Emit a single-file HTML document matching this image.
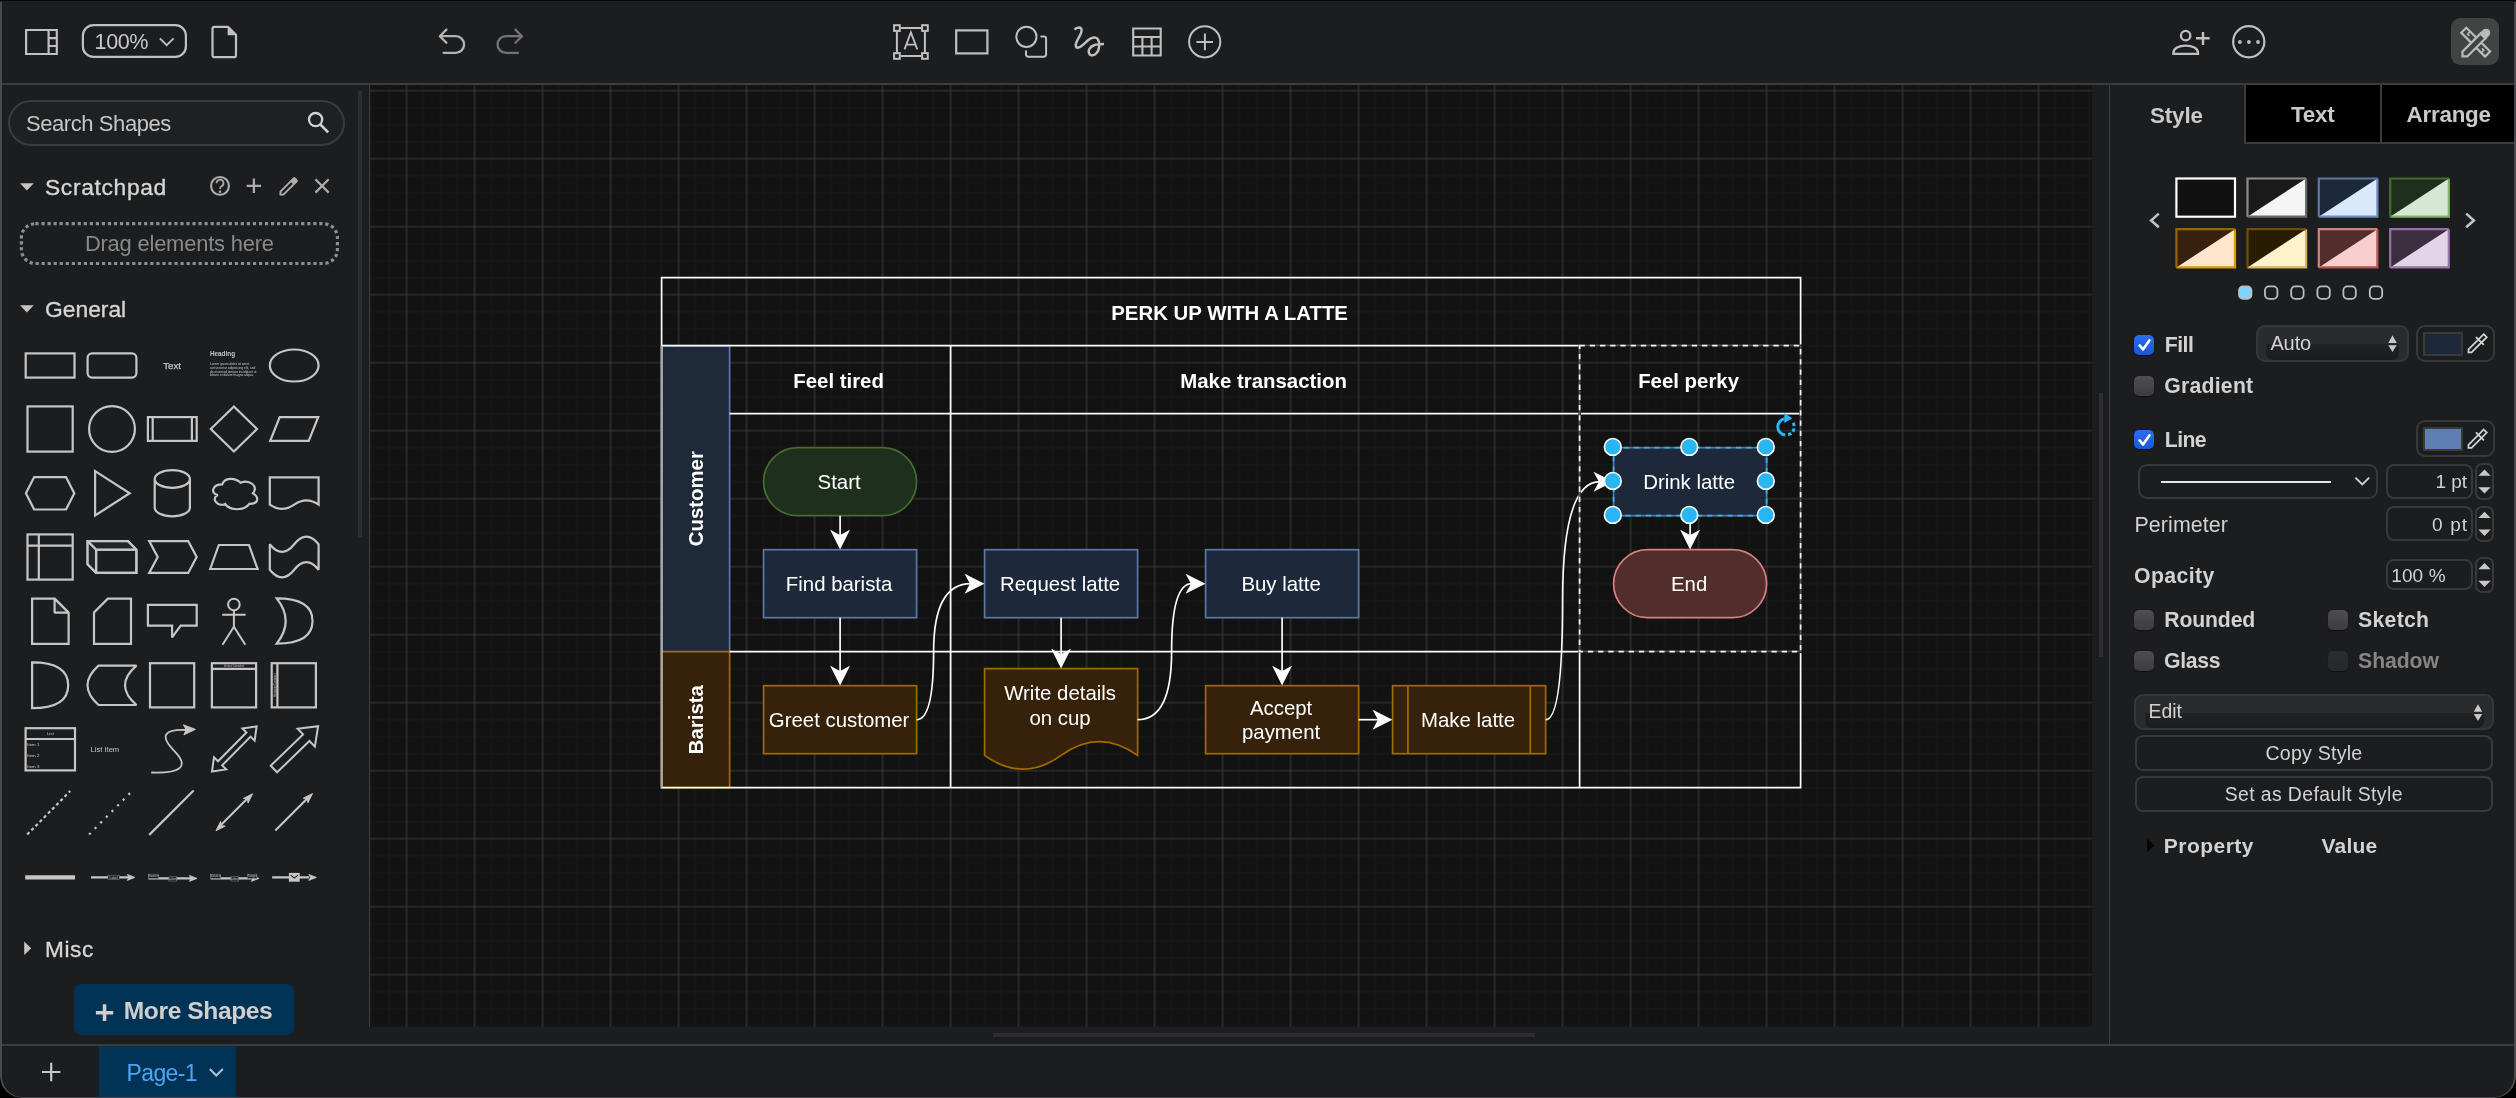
<!DOCTYPE html>
<html><head><meta charset="utf-8"><title>draw.io</title>
<style>
html,body{margin:0;padding:0;background:#000;}
body{width:2516px;height:1098px;position:relative;overflow:hidden;font-family:"Liberation Sans",sans-serif;}
#win{will-change:transform;position:absolute;left:0;top:0;width:2516px;height:1098px;background:#1c1d1f;border-radius:0 0 22px 22px;overflow:hidden;}
.t{position:absolute;white-space:pre;line-height:1;margin:0;padding:0;}
.a{position:absolute;}
svg{position:absolute;overflow:visible;}
</style></head><body><div id="win">
<svg class="a" style="left:369px;top:85px" width="1723" height="942" viewBox="0 0 1723 942">
<defs><pattern id="gp" x="37.60" y="5.70" width="68" height="68" patternUnits="userSpaceOnUse">
<path d="M17 0V68M34 0V68M51 0V68M0 17H68M0 34H68M0 51H68" stroke="#161616" stroke-width="2" fill="none"/>
<path d="M0 0V68M0 0H68M68 0V68M0 68H68" stroke="#3a3a3a" stroke-width="1.1" fill="none"/>
</pattern></defs>
<rect width="1723" height="942" fill="#121212"/><rect width="1723" height="942" fill="url(#gp)"/>
<rect x="0" y="0" width="1.2" height="942" fill="#3a3a3a"/>
</svg>
<div class="a" style="left:0;top:83px;width:2516px;height:2px;background:#3b3c3e"></div>
<div class="a" style="left:0;top:1044px;width:2516px;height:2px;background:#3b3c3e"></div>
<div class="a" style="left:2108.5px;top:85px;width:1.6px;height:959px;background:#3b3c3e"></div>
<div class="a" style="left:358px;top:91px;width:4px;height:446px;background:#2e2e30"></div>
<div class="a" style="left:2099px;top:393px;width:4px;height:264px;background:#2e2e30"></div>
<div class="a" style="left:993px;top:1033px;width:542px;height:4px;background:#2e2e30"></div>
<svg class="a" style="left:0;top:0" width="2516" height="1098" viewBox="0 0 2516 1098" fill="none" stroke="#c0c0c0" stroke-width="2.2" stroke-linecap="butt" stroke-linejoin="miter" >
<path d="M26.1 30h30.7v24H26.1zM48.6 30v24M48.6 38.2h8.2M48.6 46h8.2"/>
<rect x="82.9" y="25.1" width="103" height="31.8" rx="10.5" ry="10.5"/>
<path d="M159.8 38.3l6.9 6.9 6.9-6.9" stroke-width="1.9"/>
<path d="M214.5 26.8h13.5l8 8v20.4a2 2 0 0 1-2 2h-19.5a2 2 0 0 1-2-2v-26.4a2 2 0 0 1 2-2z" stroke-linejoin="round"/>
<path d="M227.6 26.6l8.6 8.6h-8.6z" fill="#c0c0c0" stroke="none"/>
<path d="M446.4 29.6l-6.6 6.6 6.6 6.6M440.2 36.2h15.6a8.3 8.3 0 0 1 0 16.6h-12.2" stroke="#b4b4b4" stroke-width="2.3" stroke-linecap="round" stroke-linejoin="round"/>
<path d="M515.4 29.6l6.6 6.6-6.6 6.6M521.6 36.2h-15.8a8.3 8.3 0 0 0 0 16.6h12.2" stroke="#747474" stroke-width="2.3" stroke-linecap="round" stroke-linejoin="round"/>
<g stroke-width="2">
<path d="M896.9 31.8v20.400M924.9 31.8v20.400M900.6 28.1h20.600M900.6 55.9h20.600"/>
<rect x="894.1" y="25.2" width="5.700" height="5.700"/>
<rect x="922.1" y="25.2" width="5.700" height="5.700"/>
<rect x="894.1" y="53.1" width="5.700" height="5.700"/>
<rect x="922.1" y="53.1" width="5.700" height="5.700"/>
<path d="M904.5 49.4l6.400-17 6.400 17M906.800 44.700h8.200" stroke-width="1.800"/>
</g>
<rect x="956.2" y="30.4" width="31.2" height="23"/>
<circle cx="1026.4" cy="36.800" r="10.100" stroke-width="2"/>
<path d="M1041.200 36.600h2.600a2.300 2.300 0 0 1 2.300 2.300v15.500a2.300 2.300 0 0 1-2.300 2.300h-15.500a2.300 2.300 0 0 1-2.300-2.300v-3.200" stroke-width="2" stroke-linecap="round"/>
<path d="M1074.500 29.600C1076.500 27.600 1079.500 26.800 1081 28.400C1083.500 31 1079 37 1077 41C1074.800 45.400 1075.600 48 1078.400 47.600C1082 47 1085 42.600 1088.600 39.800C1092 37.200 1096.400 36.400 1098 39.400C1100 43 1099.600 49.600 1096.600 53C1094 56 1090.400 56.200 1089 53.400C1087.600 50.600 1090 46.600 1094 45.200C1097 44.200 1100.600 44.100 1104 44.100" stroke-width="2.500" stroke-linecap="butt" stroke-linejoin="round"/>
<path d="M1133.2 28.5h27.5v27h-27.5zM1133.2 37h27.5M1133.2 46.500h27.5M1142.400 37v18.500M1151.600 37v18.500" stroke-width="2.1"/>
<circle cx="1204.7" cy="41.8" r="15.6" stroke-width="2"/><path d="M1196.4 42h16.6M1204.9 33.6v16.6" stroke-width="2"/>
<circle cx="2185.650" cy="35.650" r="4.700" stroke-width="2.300"/>
<path d="M2173.400 53.900v-1.200c0-4.400 5.600-7.100 12.300-7.100s12.300 2.700 12.300 7.100v1.200z" stroke-width="2.300" stroke-linejoin="miter"/>
<path d="M2196 38.300h13.600M2203 32v13" stroke-width="2.400"/>
<circle cx="2248.750" cy="41.800" r="15.600" stroke-width="2.200"/>
<circle cx="2239.9" cy="42" r="1.900" fill="#c0c0c0" stroke="none"/>
<circle cx="2248.9" cy="42" r="1.900" fill="#c0c0c0" stroke="none"/>
<circle cx="2258.0" cy="42" r="1.900" fill="#c0c0c0" stroke="none"/>
</svg>
<div class="a" style="left:2451px;top:18px;width:48px;height:47px;border-radius:9.5px;background:#424443"></div>
<svg class="a" style="left:0;top:0" width="2516" height="1098" viewBox="0 0 2516 1098" fill="none" stroke="#c0c0c0" stroke-width="2.2" stroke-linecap="butt" stroke-linejoin="miter" stroke="#b9bbba">
<g transform="translate(2475.700 42.200) rotate(45)" stroke="#b9bbba" stroke-width="2.200">
<path d="M-16.800 -3.600h33.600v7.200h-33.600z" />
<path d="M-11.400 -3.500v3.600h2.600M11.400 3.500v-3.600h-2.600" stroke-width="1.600"/>
</g>
<g transform="translate(2475.600 43.300) rotate(-45)" stroke="#b9bbba" stroke-width="2.200">
<path d="M-15.200 -3.400h26.200v6.800h-26.200l-3.400-3.400z" fill="#424443"/>
<path d="M9.800 -3.700h5.000a3.700 3.700 0 0 1 0 7.400h-5.000z" fill="#b9bbba" stroke-width="1"/>
</g>
</svg>
<div class="t" style="left:94.60px;top:31.00px;font-size:21.60px;letter-spacing:-0.418px;color:#c8c8c8;">100%</div>
<div class="a" style="left:99px;top:1045.600px;width:137px;height:53px;background:#003355"></div>
<div class="t" style="left:126.60px;top:1062.00px;font-size:23.00px;letter-spacing:-0.655px;color:#4ea5f5;">Page-1</div>
<svg class="a" style="left:0;top:0" width="2516" height="1098" viewBox="0 0 2516 1098" fill="none" stroke="#c0c0c0" stroke-width="2.2" stroke-linecap="butt" stroke-linejoin="miter" >
<path d="M209.8 1069l6.500 6.500 6.500-6.500" stroke="#a8c4dc" stroke-width="2"/>
<path d="M42 1072h18.400M51.200 1062.800v18.400" stroke="#c8c8c8" stroke-width="2.2"/>
</svg>
<div class="a" style="left:0;top:0;width:2516px;height:1.300px;background:#060606"></div>
<div class="a" style="left:7.5px;top:99.500px;width:337px;height:46.500px;border:2px solid #3b3c3e;border-radius:25px;box-sizing:border-box;background:#1f2022"></div>
<div class="t" style="left:26.00px;top:113.00px;font-size:22.00px;letter-spacing:-0.428px;color:#c6c6c6;">Search Shapes</div>
<svg class="a" style="left:0;top:0" width="2516" height="1098" viewBox="0 0 2516 1098" fill="none" stroke="#c0c0c0" stroke-width="2.2" stroke-linecap="butt" stroke-linejoin="miter" >
<circle cx="315.600" cy="119.600" r="6.600" stroke="#d0d0d0" stroke-width="2.3"/><path d="M320.400 124.500l7.800 7.800" stroke="#d0d0d0" stroke-width="2.600"/>
<path d="M20 183.200h13.800l-6.900 7.200z" fill="#c4c4c4" stroke="none"/>
<path d="M20 305.200h13.800l-6.900 7.200z" fill="#c4c4c4" stroke="none"/>
<path d="M24.200 941.400v13.600l7-6.800z" fill="#c4c4c4" stroke="none"/>
<g stroke="#adadad">
<circle cx="220" cy="185.900" r="8.900" stroke-width="2.100"/>
<path d="M216.500 183.300a3.500 3.500 0 1 1 5.200 3c-1.300 0.800-1.700 1.400-1.700 2.600" stroke-width="1.700"/><circle cx="220" cy="191.700" r="1.250" fill="#adadad" stroke="none"/>
<path d="M246.700 185.900h14.400M253.900 178.600v14.500" stroke-width="2.300"/>
<g transform="translate(288 187.100) rotate(-45)" stroke-width="2">
<path d="M-8.600 -2.100H9.800a1 1 0 0 1 1 1V1.100a1 1 0 0 1-1 1H-8.600L-10.700 0Z" stroke-linejoin="round" stroke-width="1.900"/>
<path d="M5.600 -2.800H10.300a1.400 1.400 0 0 1 1.400 1.400V1.400a1.400 1.400 0 0 1-1.400 1.400H5.600Z" fill="#adadad" stroke="none"/>
</g>
<path d="M315.400 179.300l13.300 13.300M328.700 179.300l-13.300 13.300" stroke-width="2.200"/>
</g>
</svg>
<div class="t" style="left:45.00px;top:176.00px;font-size:22.80px;letter-spacing:0.662px;color:#d6d6d6;-webkit-text-stroke:0.35px #d6d6d6;">Scratchpad</div>
<div class="t" style="left:45.00px;top:298.00px;font-size:22.80px;letter-spacing:0.013px;color:#d6d6d6;-webkit-text-stroke:0.35px #d6d6d6;">General</div>
<div class="t" style="left:45.00px;top:939.00px;font-size:22.60px;letter-spacing:0.586px;color:#d6d6d6;-webkit-text-stroke:0.35px #d6d6d6;">Misc</div>
<svg class="a" style="left:0;top:0" width="380" height="300" viewBox="0 0 380 300"><rect x="21.400" y="223.700" width="316" height="39.800" rx="14" fill="none" stroke="#8e8e8e" stroke-width="3.200" stroke-dasharray="3.200 2.840"/></svg>
<div class="t" style="left:84.90px;top:233.00px;font-size:21.90px;letter-spacing:-0.190px;color:#8a8a8a;">Drag elements here</div>
<div class="a" style="left:74.300px;top:984px;width:220px;height:51px;border-radius:7px;background:#003355"></div>
<div class="t" style="left:123.80px;top:999.00px;font-size:24.60px;letter-spacing:-0.411px;color:#cfcfcf;font-weight:bold;">More Shapes</div>
<svg class="a" style="left:0;top:0" width="2516" height="1098" viewBox="0 0 2516 1098" fill="none" stroke="#c0c0c0" stroke-width="2.2" stroke-linecap="butt" stroke-linejoin="miter" >
<path d="M95.900 1012.700h17.300M104.550 1004.300v16.800" stroke="#cfcfcf" stroke-width="3.500"/>
</svg>
<svg class="a" style="left:0;top:0" width="380" height="1098" viewBox="0 0 380 1098" fill="none" stroke="#c6c6c6" stroke-width="2.2" stroke-linejoin="miter" stroke-miterlimit="2.5" font-family="Liberation Sans, sans-serif">
<g transform="translate(24.60 340.00)"><rect x="1.100" y="13.400" width="48.800" height="24.200"/></g>
<g transform="translate(86.50 340.00)"><rect x="1.100" y="13.400" width="48.800" height="24.200" rx="4.500"/></g>
<g transform="translate(146.80 340.00)"><text x="25.300" y="28.800" font-size="9.700" text-anchor="middle" fill="#c6c6c6" stroke="#c6c6c6" stroke-width="0.25">Text</text></g>
<g transform="translate(208.40 340.00)"><text x="1.500" y="15.900" font-size="6.400" font-weight="bold" fill="#c6c6c6" stroke="none">Heading</text><text x="1.500" y="25.30" font-size="3.350" fill="#c6c6c6" stroke="none" textLength="40.0" lengthAdjust="spacingAndGlyphs">Lorem ipsum dolor sit amet,</text><text x="1.500" y="29.02" font-size="3.350" fill="#c6c6c6" stroke="none" textLength="45.5" lengthAdjust="spacingAndGlyphs">consectetur adipisicing elit, sed</text><text x="1.500" y="32.74" font-size="3.350" fill="#c6c6c6" stroke="none" textLength="46.5" lengthAdjust="spacingAndGlyphs">do eiusmod tempor incididunt ut</text><text x="1.500" y="36.46" font-size="3.350" fill="#c6c6c6" stroke="none" textLength="44.0" lengthAdjust="spacingAndGlyphs">labore et dolore magna aliqua.</text></g>
<g transform="translate(268.70 340.00)"><ellipse cx="25.500" cy="25.500" rx="24.400" ry="16"/></g>
<g transform="translate(24.60 403.50)"><rect x="2.900" y="2.900" width="45.200" height="45.200"/></g>
<g transform="translate(86.50 403.50)"><circle cx="25.500" cy="25.500" r="22.900"/></g>
<g transform="translate(146.80 403.50)"><rect x="1.100" y="13.600" width="48.800" height="23.800"/><path d="M5.900 13.600v23.800M45.100 13.600v23.800"/></g>
<g transform="translate(208.40 403.50)"><path d="M25.500 3.000l23.100 22.500-23.100 22.500-23.100-22.500z"/></g>
<g transform="translate(268.70 403.50)"><path d="M11 13.600h38.500l-9.500 23.800h-38.500z"/></g>
<g transform="translate(24.60 467.80)"><path d="M1.300 25.500l8.300-16.200h31.800l8.300 16.200-8.300 16.200h-31.800z"/></g>
<g transform="translate(86.50 467.80)"><path d="M8.600 3.300l34.600 22.200-34.600 22.200z"/></g>
<g transform="translate(146.80 467.80)"><path d="M7.900 11.200a17.600 8.800 0 0 1 35.200 0v28.600a17.600 8.800 0 0 1-35.200 0zM7.900 11.200a17.600 8.800 0 0 0 35.200 0"/></g>
<g transform="translate(208.40 467.80)"><path d="M13.80 16.65 C3.96 16.65 1.50 25.50 9.37 27.27 C1.50 31.16 10.36 39.66 16.75 36.12 C21.18 43.20 35.94 43.20 40.86 36.12 C50.70 36.12 50.70 29.04 44.55 25.50 C50.70 18.42 40.86 11.34 32.25 14.88 C26.10 9.57 16.26 9.57 13.80 16.65Z"/></g>
<g transform="translate(268.70 467.80)"><path d="M1.10 9.60H49.90V36.80Q37.70 28.16 25.50 36.80Q13.30 45.44 1.10 36.80Z"/></g>
<g transform="translate(24.60 531.50)"><rect x="2.900" y="2.900" width="45.200" height="45.200"/><path d="M14.200 2.900v45.200M2.900 14.200h45.200"/></g>
<g transform="translate(86.50 531.50)"><path d="M1.100 9.600h40.300l8.500 8.500v23.300h-40.300l-8.500-8.500z"/><path d="M1.100 9.600l8.500 8.500h40.300M9.600 18.100v23.300"/><path d="M1.100 9.600h40.300l8.500 8.500h-40.300v23.300l-8.500-8.500z" fill="#26292b" stroke="none" opacity="0.8"/><path d="M1.100 9.600h40.300l8.500 8.500v23.300h-40.300l-8.500-8.500zM1.100 9.600l8.500 8.500h40.300M9.600 18.100v23.300"/></g>
<g transform="translate(146.80 531.50)"><path d="M2.400 9.600h39l8.500 15.900-8.500 15.900h-39l8.500-15.900z"/></g>
<g transform="translate(208.40 531.50)"><path d="M1.800 37.500l8.600-24h30.200l8.600 24z"/></g>
<g transform="translate(268.70 531.50)"><path d="M1.10 12.78Q13.30 28.04 25.50 12.78Q37.70 -2.48 49.90 12.78V38.22Q37.70 22.96 25.50 38.22Q13.30 53.48 1.10 38.22Z"/></g>
<g transform="translate(24.60 595.50)"><path d="M7.500 3.100h22.500l14 14v31.300h-36.500z"/><path d="M30 3.100v14h14z" fill="#26292b" stroke-linejoin="bevel"/></g>
<g transform="translate(86.50 595.50)"><path d="M21.300 3.100h23.200v45.300h-37v-31.500z"/></g>
<g transform="translate(146.80 595.50)"><path d="M1.100 9.300h48.800v20.800h-16l-8.600 11.800v-11.800h-24.200z"/></g>
<g transform="translate(208.40 595.50)"><circle cx="25.500" cy="9" r="5.800" stroke-width="2"/><path d="M25.500 14.800v16.400M13.800 19.200h23.400M25.500 31.200l-11.400 18M25.500 31.200l11.400 18" stroke-width="2"/></g>
<g transform="translate(268.70 595.50)"><path d="M8 2.900Q43.800 2.900 43.800 25.500Q43.800 48.100 8 48.100Q26 25.500 8 2.900Z"/></g>
<g transform="translate(24.60 659.80)"><path d="M7.500 2.600Q43.600 2.600 43.600 25.500Q43.600 48.400 7.500 48.400Z"/></g>
<g transform="translate(86.50 659.80)"><path d="M12 5.800h38l0 0Q27 25.500 50 45.200h-38Q-10 25.500 12 5.800Z" /></g>
<g transform="translate(146.80 659.80)"><rect x="3.200" y="3.400" width="44.200" height="44.200"/></g>
<g transform="translate(208.40 659.80)"><rect x="3.500" y="3.400" width="44.200" height="44.200"/><path d="M3.500 9h44.200"/><text x="25.600" y="7.300" font-size="2.600" text-anchor="middle" fill="#c6c6c6" stroke="none">Vertical Container</text></g>
<g transform="translate(268.70 659.80)"><rect x="3" y="3.400" width="44.200" height="44.200"/><path d="M8.700 3.400v44.200"/><text transform="translate(6.900 25.500) rotate(-90)" font-size="2.600" text-anchor="middle" fill="#c6c6c6" stroke="none">Horizontal Container</text></g>
<g transform="translate(24.60 723.80)"><rect x="1" y="4.400" width="49.400" height="42.200"/><path d="M1 15.200h49.400"/><text x="25.700" y="11.700" font-size="4.400" text-anchor="middle" fill="#c6c6c6" stroke="none">List</text><text x="2.600" y="22.6" font-size="4.400" fill="#c6c6c6" stroke="none">Item 1</text><text x="2.600" y="33.3" font-size="4.400" fill="#c6c6c6" stroke="none">Item 2</text><text x="2.600" y="44.0" font-size="4.400" fill="#c6c6c6" stroke="none">Item 3</text></g>
<g transform="translate(86.50 723.80)"><text x="4" y="28.200" font-size="7.600" fill="#c6c6c6" stroke="none">List Item</text></g>
<g transform="translate(146.80 723.80)"><path d="M4.400 48.700Q50 50 27.600 27.300Q5.200 4.600 40 6.200" stroke-width="1.800"/><path d="M48.600 5.600l-11.500 5.400 2.300-5.100-2.800-4.900z" fill="#c6c6c6" stroke="#c6c6c6" stroke-width="1"/></g>
<g transform="translate(208.40 723.80)"><path d="M3.60 47.70L17.80 45.57L13.75 41.56L42.18 12.82L46.23 16.82L48.20 2.60L34.00 4.73L38.05 8.74L9.62 37.48L5.57 33.48Z" stroke-width="2"/></g>
<g transform="translate(268.70 723.80)"><path d="M8.40 48.50L40.75 17.18L46.17 22.79L49.40 2.40L28.92 4.97L34.35 10.57L2.00 41.90Z" stroke-width="2"/></g>
<g transform="translate(24.60 787.50)"><path d="M2.600 47l43-43.400" stroke-dasharray="3.100 2.800"/></g>
<g transform="translate(86.50 787.50)"><path d="M2.600 47l41-41.400" stroke-dasharray="2.200 5.800"/></g>
<g transform="translate(146.80 787.50)"><path d="M2.400 47.400l44.400-44.400"/></g>
<g transform="translate(208.40 787.50)"><path d="M10 40l30-30" stroke-width="2"/><path d="M44.20 6.30L39.60 15.49L39.14 11.36L35.01 10.90Z" fill="#c6c6c6" stroke="#c6c6c6" stroke-width="1"/><path d="M7.60 43.20L12.20 34.01L12.66 38.14L16.79 38.60Z" fill="#c6c6c6" stroke="#c6c6c6" stroke-width="1"/></g>
<g transform="translate(268.70 787.50)"><path d="M6.600 43l32-32" stroke-width="2"/><path d="M43.80 6.10L39.20 15.29L38.74 11.16L34.61 10.70Z" fill="#c6c6c6" stroke="#c6c6c6" stroke-width="1"/></g>
<g transform="translate(24.60 851.90)"><path d="M0.600 25.500h49.800" stroke-width="4.400"/></g>
<g transform="translate(86.50 851.90)"><path d="M4.5 25.50H43.4" stroke-width="2.100"/><path d="M48.4 25.50l-7.600 3 1.700-3-1.700-3z" fill="#c6c6c6" stroke="#c6c6c6" stroke-width="0.800"/><rect x="21.5" y="23.4" width="11.3" height="4.200" fill="#1c1d1f" stroke="#8a8a8a" stroke-width="0.500"/><text x="27.1" y="26.7" font-size="3.300" text-anchor="middle" fill="#c6c6c6" stroke="none">Label</text></g>
<g transform="translate(146.80 851.90)"><path d="M1.7 26.50H45.2" stroke-width="2.100"/><path d="M50.2 26.50l-7.600 3 1.700-3-1.700-3z" fill="#c6c6c6" stroke="#c6c6c6" stroke-width="0.800"/><rect x="1.7" y="22.3" width="10.0" height="4.200" fill="#1c1d1f" stroke="#8a8a8a" stroke-width="0.500"/><text x="6.7" y="25.6" font-size="3.300" text-anchor="middle" fill="#c6c6c6" stroke="none">Source</text><rect x="22.0" y="24.9" width="8.0" height="4.200" fill="#1c1d1f" stroke="#8a8a8a" stroke-width="0.500"/><text x="26.0" y="28.2" font-size="3.300" text-anchor="middle" fill="#c6c6c6" stroke="none">Label</text></g>
<g transform="translate(208.40 851.90)"><path d="M2.2 26.50H45.6" stroke-width="2.100"/><path d="M50.6 26.50l-7.600 3 1.700-3-1.700-3z" fill="#c6c6c6" stroke="#c6c6c6" stroke-width="0.800"/><rect x="2.2" y="22.3" width="10.0" height="4.200" fill="#1c1d1f" stroke="#8a8a8a" stroke-width="0.500"/><text x="7.2" y="25.6" font-size="3.300" text-anchor="middle" fill="#c6c6c6" stroke="none">Source</text><rect x="22.4" y="24.9" width="8.0" height="4.200" fill="#1c1d1f" stroke="#8a8a8a" stroke-width="0.500"/><text x="26.4" y="28.2" font-size="3.300" text-anchor="middle" fill="#c6c6c6" stroke="none">Label</text><rect x="39.0" y="22.3" width="9.5" height="4.200" fill="#1c1d1f" stroke="#8a8a8a" stroke-width="0.500"/><text x="43.8" y="25.6" font-size="3.300" text-anchor="middle" fill="#c6c6c6" stroke="none">Target</text></g>
<g transform="translate(268.70 851.90)"><path d="M3.400 25.500h37" stroke-width="2.100"/><path d="M47.700 25.500l-7.600 3 1.700-3-1.700-3z" fill="#c6c6c6" stroke="#c6c6c6" stroke-width="0.800"/><rect x="20.200" y="21" width="10.800" height="8.800" fill="#c6c6c6" stroke="none"/><path d="M22 23.200l3.600 3 3.600-3" stroke="#1c1d1f" stroke-width="1.100"/></g>
</svg>
<svg class="a" style="left:0;top:0" width="2516" height="1098" viewBox="0 0 2516 1098" fill="none" stroke="#fcfcfc" stroke-width="1.7" font-family="Liberation Sans, sans-serif">
<rect x="661.60" y="345.70" width="68.00" height="306.00" fill="#1e293a" stroke="#5c79a3"/>
<rect x="661.60" y="651.70" width="68.00" height="136.00" fill="#36220a" stroke="#a06a00"/>
<path d="M661.60 277.70H1800.60V787.70H661.60Z"/>
<path d="M661.60 345.70H1800.60"/>
<path d="M729.60 413.70H1800.60"/>
<path d="M729.60 651.70H1800.60"/>
<path d="M950.60 345.70V787.70"/>
<path d="M1579.60 345.70V787.70"/>
<path d="M661.60 345.70V787.70" stroke="#a9a9a9"/>
<rect x="763.60" y="447.70" width="153.00" height="68.00" fill="#1f2f1e" stroke="#446e2c" rx="34.00"/>
<rect x="763.60" y="549.70" width="153.00" height="68.00" fill="#1d293b" stroke="#5c79a3" />
<rect x="763.60" y="685.70" width="153.00" height="68.00" fill="#36220a" stroke="#a06a00" />
<rect x="984.60" y="549.70" width="153.00" height="68.00" fill="#1d293b" stroke="#5c79a3" />
<rect x="1205.60" y="549.70" width="153.00" height="68.00" fill="#1d293b" stroke="#5c79a3" />
<rect x="1205.60" y="685.70" width="153.00" height="68.00" fill="#36220a" stroke="#a06a00" />
<rect x="1392.60" y="685.70" width="153.00" height="68.00" fill="#36220a" stroke="#a06a00" />
<path d="M1407.90 685.70V753.70M1530.30 685.70V753.70" stroke="#a06a00"/>
<rect x="1613.60" y="447.70" width="153.00" height="68.00" fill="#1d293b" stroke="#5c79a3" />
<rect x="1613.60" y="549.70" width="153.00" height="68.00" fill="#512d2b" stroke="#d7817e" rx="34.00"/>
<path d="M984.60 668.70H1137.60V755.40Q1099.35 727.86 1061.10 755.40Q1022.85 782.94 984.60 755.40Z" fill="#36220a" stroke="#a06a00"/>
<path d="M840.10 515.70V535.98"/>
<path d="M840.10 548.20L831.55 531.10L840.10 535.68L848.65 531.10Z" fill="#fcfcfc" stroke="#fcfcfc" stroke-width="1.2" stroke-linejoin="miter"/>
<path d="M840.10 617.70V671.98"/>
<path d="M840.10 684.20L831.55 667.10L840.10 671.68L848.65 667.10Z" fill="#fcfcfc" stroke="#fcfcfc" stroke-width="1.2" stroke-linejoin="miter"/>
<path d="M1061.10 617.70V654.98"/>
<path d="M1061.10 667.20L1052.55 650.10L1061.10 654.68L1069.65 650.10Z" fill="#fcfcfc" stroke="#fcfcfc" stroke-width="1.2" stroke-linejoin="miter"/>
<path d="M1282.10 617.70V671.98"/>
<path d="M1282.10 684.20L1273.55 667.10L1282.10 671.68L1290.65 667.10Z" fill="#fcfcfc" stroke="#fcfcfc" stroke-width="1.2" stroke-linejoin="miter"/>
<path d="M1690.10 515.70V535.98"/>
<path d="M1690.10 548.20L1681.55 531.10L1690.10 535.68L1698.65 531.10Z" fill="#fcfcfc" stroke="#fcfcfc" stroke-width="1.2" stroke-linejoin="miter"/>
<path d="M1358.60 719.70H1378.88"/>
<path d="M1391.10 719.70L1374.00 728.25L1378.58 719.70L1374.00 711.15Z" fill="#fcfcfc" stroke="#fcfcfc" stroke-width="1.2" stroke-linejoin="miter"/>
<path d="M916.60 719.70Q933.60 719.70 933.60 651.70Q933.60 583.70 970.88 583.70"/>
<path d="M983.10 583.70L966.00 592.25L970.58 583.70L966.00 575.15Z" fill="#fcfcfc" stroke="#fcfcfc" stroke-width="1.2" stroke-linejoin="miter"/>
<path d="M1137.60 719.70Q1171.60 719.70 1171.60 651.70Q1171.60 583.70 1191.88 583.70"/>
<path d="M1204.10 583.70L1187.00 592.25L1191.58 583.70L1187.00 575.15Z" fill="#fcfcfc" stroke="#fcfcfc" stroke-width="1.2" stroke-linejoin="miter"/>
<path d="M1545.60 719.70Q1562.60 719.70 1562.60 600.70Q1562.60 481.70 1599.88 481.70"/>
<path d="M1612.10 481.70L1595.00 490.25L1599.58 481.70L1595.00 473.15Z" fill="#fcfcfc" stroke="#fcfcfc" stroke-width="1.2" stroke-linejoin="miter"/>
<path d="M1579.60 345.70H1800.60V651.70H1579.60Z" stroke="#121212" stroke-width="2.400"/>
<path d="M1579.60 345.70H1800.60V651.70H1579.60Z" stroke="#6a6a6a" stroke-width="0.900"/>
<path d="M1579.60 345.70H1800.60V651.70H1579.60Z" stroke="#f4f4f4" stroke-width="1.700" stroke-dasharray="5.300 4.900"/>
<rect x="1613.60" y="447.70" width="153.00" height="68.00" stroke="#29b6f2" stroke-width="1.700" stroke-dasharray="5.100 5.100"/>
<circle cx="1612.80" cy="446.90" r="8.400" fill="#29b6f2" stroke="#ffffff" stroke-width="1.600"/>
<circle cx="1612.80" cy="480.90" r="8.400" fill="#29b6f2" stroke="#ffffff" stroke-width="1.600"/>
<circle cx="1612.80" cy="514.90" r="8.400" fill="#29b6f2" stroke="#ffffff" stroke-width="1.600"/>
<circle cx="1689.30" cy="446.90" r="8.400" fill="#29b6f2" stroke="#ffffff" stroke-width="1.600"/>
<circle cx="1689.30" cy="514.90" r="8.400" fill="#29b6f2" stroke="#ffffff" stroke-width="1.600"/>
<circle cx="1765.80" cy="446.90" r="8.400" fill="#29b6f2" stroke="#ffffff" stroke-width="1.600"/>
<circle cx="1765.80" cy="480.90" r="8.400" fill="#29b6f2" stroke="#ffffff" stroke-width="1.600"/>
<circle cx="1765.80" cy="514.90" r="8.400" fill="#29b6f2" stroke="#ffffff" stroke-width="1.600"/>
<g transform="translate(1786.000 426.900)" stroke="#29b6f2" fill="none">
<path d="M-1.420 -8.070A8.200 8.200 0 0 0 -0.710 8.170" stroke-width="3"/>
<path d="M2.120 7.920A8.200 8.200 0 0 0 6.720 -4.700" stroke-width="3" stroke-dasharray="3.400 2.300"/>
<path d="M-1.700 -14.000L-1.700 -4.000L6.400 -8.600Z" fill="#29b6f2" stroke="none"/>
</g>
<text x="1229.60" y="319.90" font-size="20.40" text-anchor="middle" fill="#ffffff" stroke="none" font-weight="bold">PERK UP WITH A LATTE</text>
<text x="838.60" y="387.90" font-size="20.40" text-anchor="middle" fill="#ffffff" stroke="none" font-weight="bold">Feel tired</text>
<text x="1263.60" y="387.90" font-size="20.40" text-anchor="middle" fill="#ffffff" stroke="none" font-weight="bold">Make transaction</text>
<text x="1688.60" y="387.90" font-size="20.40" text-anchor="middle" fill="#ffffff" stroke="none" font-weight="bold">Feel perky</text>
<text x="839.10" y="489.10" font-size="20.40" text-anchor="middle" fill="#ffffff" stroke="none">Start</text>
<text x="839.10" y="591.10" font-size="20.40" text-anchor="middle" fill="#ffffff" stroke="none">Find barista</text>
<text x="839.10" y="727.10" font-size="20.40" text-anchor="middle" fill="#ffffff" stroke="none">Greet customer</text>
<text x="1060.10" y="591.10" font-size="20.40" text-anchor="middle" fill="#ffffff" stroke="none">Request latte</text>
<text x="1281.10" y="591.10" font-size="20.40" text-anchor="middle" fill="#ffffff" stroke="none">Buy latte</text>
<text x="1468.10" y="727.10" font-size="20.40" text-anchor="middle" fill="#ffffff" stroke="none">Make latte</text>
<text x="1689.10" y="489.10" font-size="20.40" text-anchor="middle" fill="#ffffff" stroke="none">Drink latte</text>
<text x="1689.10" y="591.10" font-size="20.40" text-anchor="middle" fill="#ffffff" stroke="none">End</text>
<text x="1281.10" y="714.75" font-size="20.40" text-anchor="middle" fill="#ffffff" stroke="none">Accept</text>
<text x="1281.10" y="739.25" font-size="20.40" text-anchor="middle" fill="#ffffff" stroke="none">payment</text>
<text x="1060.10" y="700.30" font-size="20.40" text-anchor="middle" fill="#ffffff" stroke="none">Write details</text>
<text x="1060.10" y="724.80" font-size="20.40" text-anchor="middle" fill="#ffffff" stroke="none">on cup</text>
<text transform="translate(695.60 498.70) rotate(-90)" x="0" y="7.30" font-size="20.40" font-weight="bold" text-anchor="middle" fill="#ffffff" stroke="none">Customer</text>
<text transform="translate(695.60 719.70) rotate(-90)" x="0" y="7.30" font-size="20.40" font-weight="bold" text-anchor="middle" fill="#ffffff" stroke="none">Barista</text>
</svg>
<div class="a" style="left:2244px;top:85px;width:272px;height:59px;background:#000"></div>
<div class="a" style="left:2244px;top:85px;width:2.200px;height:59px;background:#3b3c3e"></div>
<div class="a" style="left:2380px;top:85px;width:2.200px;height:59px;background:#3b3c3e"></div>
<div class="a" style="left:2244px;top:142px;width:272px;height:2px;background:#3b3c3e"></div>
<div class="t" style="left:2150.00px;top:105.00px;font-size:22.40px;letter-spacing:-0.134px;color:#c9c9c9;font-weight:bold;">Style</div>
<div class="t" style="left:2291.00px;top:104.00px;font-size:22.40px;letter-spacing:-0.199px;color:#c9c9c9;font-weight:bold;">Text</div>
<div class="t" style="left:2406.50px;top:104.00px;font-size:22.40px;letter-spacing:-0.230px;color:#c9c9c9;font-weight:bold;">Arrange</div>
<svg class="a" style="left:0;top:0" width="2516" height="1098" viewBox="0 0 2516 1098" fill="none" stroke="#c0c0c0" stroke-width="2.2" stroke-linecap="butt" stroke-linejoin="miter" stroke-width="2.4">
<rect x="2176.40" y="178.50" width="58.60" height="38.20" fill="#111111" stroke="none"/>
<rect x="2176.40" y="178.50" width="58.60" height="38.20" stroke="#ffffff"/>
<rect x="2247.50" y="178.50" width="58.60" height="38.20" fill="#1a1a1a" stroke="none"/>
<path d="M2306.10 178.50L2306.10 216.70L2247.50 216.70Z" fill="#f5f5f5" stroke="none"/>
<path d="M2306.10 178.50V216.70H2247.50" stroke="#6a6a6a"/>
<path d="M2247.50 216.70V178.50H2306.10" stroke="#8c8c8c"/>
<rect x="2318.80" y="178.50" width="58.60" height="38.20" fill="#1c293c" stroke="none"/>
<path d="M2377.40 178.50L2377.40 216.70L2318.80 216.70Z" fill="#dae8fc" stroke="none"/>
<path d="M2377.40 178.50V216.70H2318.80" stroke="#6c8ebf"/>
<path d="M2318.80 216.70V178.50H2377.40" stroke="#5c79a3"/>
<rect x="2390.20" y="178.50" width="58.60" height="38.20" fill="#1f2f1e" stroke="none"/>
<path d="M2448.80 178.50L2448.80 216.70L2390.20 216.70Z" fill="#d5e8d4" stroke="none"/>
<path d="M2448.80 178.50V216.70H2390.20" stroke="#82b366"/>
<path d="M2390.20 216.70V178.50H2448.80" stroke="#446e2c"/>
<rect x="2176.40" y="229.20" width="58.60" height="38.20" fill="#36210f" stroke="none"/>
<path d="M2235.00 229.20L2235.00 267.40L2176.40 267.40Z" fill="#ffe6cc" stroke="none"/>
<path d="M2235.00 229.20V267.40H2176.40" stroke="#d79b00"/>
<path d="M2176.40 267.40V229.20H2235.00" stroke="#996500"/>
<rect x="2247.50" y="229.20" width="58.60" height="38.20" fill="#281d00" stroke="none"/>
<path d="M2306.10 229.20L2306.10 267.40L2247.50 267.40Z" fill="#fff2cc" stroke="none"/>
<path d="M2306.10 229.20V267.40H2247.50" stroke="#d6b656"/>
<path d="M2247.50 267.40V229.20H2306.10" stroke="#6d5100"/>
<rect x="2318.80" y="229.20" width="58.60" height="38.20" fill="#512d2b" stroke="none"/>
<path d="M2377.40 229.20L2377.40 267.40L2318.80 267.40Z" fill="#f8cecc" stroke="none"/>
<path d="M2377.40 229.20V267.40H2318.80" stroke="#b85450"/>
<path d="M2318.80 267.40V229.20H2377.40" stroke="#d7817e"/>
<rect x="2390.20" y="229.20" width="58.60" height="38.20" fill="#392f3f" stroke="none"/>
<path d="M2448.80 229.20L2448.80 267.40L2390.20 267.40Z" fill="#e1d5e7" stroke="none"/>
<path d="M2448.80 229.20V267.40H2390.20" stroke="#9673a6"/>
<path d="M2390.20 267.40V229.20H2448.80" stroke="#9673a6"/>
<path d="M2158.800 213.600l-7.600 6.800 7.600 6.800" stroke="#c4c4c4" stroke-width="2.600"/>
<path d="M2466.200 213.600l7.600 6.800-7.600 6.800" stroke="#c4c4c4" stroke-width="2.600"/>
<rect x="2239.0" y="286.400" width="12.400" height="12.400" rx="4" fill="#7fd4ff" stroke="#bdbdbd" stroke-width="1.800"/>
<rect x="2265.0" y="286.400" width="12.400" height="12.400" rx="4" fill="none" stroke="#bdbdbd" stroke-width="1.800"/>
<rect x="2291.2" y="286.400" width="12.400" height="12.400" rx="4" fill="none" stroke="#bdbdbd" stroke-width="1.800"/>
<rect x="2317.4" y="286.400" width="12.400" height="12.400" rx="4" fill="none" stroke="#bdbdbd" stroke-width="1.800"/>
<rect x="2343.4" y="286.400" width="12.400" height="12.400" rx="4" fill="none" stroke="#bdbdbd" stroke-width="1.800"/>
<rect x="2369.8" y="286.400" width="12.400" height="12.400" rx="4" fill="none" stroke="#bdbdbd" stroke-width="1.800"/>
</svg>
<div class="a" style="left:2134.0px;top:335.2px;width:20.400px;height:19.600px;border-radius:5px;background:linear-gradient(#2a6ef0,#1a56d8);box-shadow:0 0.5px 1px rgba(0,0,0,.5)"></div>
<svg class="a" style="left:2134.0px;top:335.2px" width="21" height="20" viewBox="0 0 21 20" fill="none" stroke="#fff" stroke-width="2.600" stroke-linecap="round" stroke-linejoin="round"><path d="M5.600 10.400l3.400 4 6.400-9"/></svg>
<div class="a" style="left:2134.0px;top:376.0px;width:20.400px;height:19.600px;border-radius:5px;background:linear-gradient(#4e4e50,#3d3d3f);box-shadow:0 0.5px 1px rgba(0,0,0,.5)"></div>
<div class="a" style="left:2134.0px;top:429.9px;width:20.400px;height:19.600px;border-radius:5px;background:linear-gradient(#2a6ef0,#1a56d8);box-shadow:0 0.5px 1px rgba(0,0,0,.5)"></div>
<svg class="a" style="left:2134.0px;top:429.9px" width="21" height="20" viewBox="0 0 21 20" fill="none" stroke="#fff" stroke-width="2.600" stroke-linecap="round" stroke-linejoin="round"><path d="M5.600 10.400l3.400 4 6.400-9"/></svg>
<div class="a" style="left:2134.0px;top:610.0px;width:20.400px;height:19.600px;border-radius:5px;background:linear-gradient(#4e4e50,#3d3d3f);box-shadow:0 0.5px 1px rgba(0,0,0,.5)"></div>
<div class="a" style="left:2328.0px;top:610.0px;width:20.400px;height:19.600px;border-radius:5px;background:linear-gradient(#4e4e50,#3d3d3f);box-shadow:0 0.5px 1px rgba(0,0,0,.5)"></div>
<div class="a" style="left:2134.0px;top:651.0px;width:20.400px;height:19.600px;border-radius:5px;background:linear-gradient(#4e4e50,#3d3d3f);box-shadow:0 0.5px 1px rgba(0,0,0,.5)"></div>
<div class="a" style="left:2328.0px;top:651.0px;width:20.400px;height:19.600px;border-radius:5px;background:linear-gradient(#2c2d2f,#27282a);box-shadow:0 0.5px 1px rgba(0,0,0,.5)"></div>
<div class="t" style="left:2164.80px;top:334.00px;font-size:21.20px;letter-spacing:-0.504px;color:#d2d2d2;font-weight:bold;">Fill</div>
<div class="t" style="left:2164.30px;top:375.00px;font-size:21.20px;letter-spacing:0.247px;color:#d2d2d2;font-weight:bold;">Gradient</div>
<div class="t" style="left:2164.80px;top:429.00px;font-size:21.20px;letter-spacing:-0.596px;color:#d2d2d2;font-weight:bold;">Line</div>
<div class="t" style="left:2134.50px;top:515.00px;font-size:21.40px;letter-spacing:0.091px;color:#d2d2d2;">Perimeter</div>
<div class="t" style="left:2134.00px;top:565.00px;font-size:21.20px;letter-spacing:0.423px;color:#d2d2d2;font-weight:bold;">Opacity</div>
<div class="t" style="left:2164.30px;top:609.00px;font-size:21.20px;letter-spacing:-0.143px;color:#d2d2d2;font-weight:bold;">Rounded</div>
<div class="t" style="left:2358.10px;top:609.00px;font-size:21.20px;letter-spacing:0.297px;color:#d2d2d2;font-weight:bold;">Sketch</div>
<div class="t" style="left:2164.00px;top:650.00px;font-size:21.20px;letter-spacing:-0.287px;color:#d2d2d2;font-weight:bold;">Glass</div>
<div class="t" style="left:2358.10px;top:650.00px;font-size:21.20px;letter-spacing:-0.085px;color:#858585;font-weight:bold;">Shadow</div>
<div class="t" style="left:2163.80px;top:835.00px;font-size:21.00px;letter-spacing:0.478px;color:#d2d2d2;font-weight:bold;">Property</div>
<div class="t" style="left:2321.50px;top:835.00px;font-size:21.00px;letter-spacing:0.232px;color:#d2d2d2;font-weight:bold;">Value</div>
<div class="a" style="left:2256.4px;top:325.4px;width:152.7px;height:36.4px;border:2.0px solid #36373a;border-radius:9.0px;box-sizing:border-box;background:#2a2b2d"></div>
<div class="a" style="left:2266px;top:344px;width:132.500px;height:15.600px;background:linear-gradient(#212224,#1b1c1e);border-radius:0 0 7px 7px"></div>
<div class="t" style="left:2270.40px;top:333.00px;font-size:20.00px;letter-spacing:-0.113px;color:#d2d2d2;">Auto</div>
<div class="a" style="left:2416.1px;top:325.0px;width:78.7px;height:37.0px;border:2.0px solid #39393b;border-radius:9.0px;box-sizing:border-box;background:transparent"></div>
<div class="a" style="left:2423.100px;top:332px;width:40px;height:24px;background:#1d293b;border:2px solid #3a3a39;box-sizing:border-box"></div>
<div class="a" style="left:2416.1px;top:420.3px;width:78.7px;height:37.0px;border:2.0px solid #39393b;border-radius:9.0px;box-sizing:border-box;background:transparent"></div>
<div class="a" style="left:2423.100px;top:427.300px;width:40px;height:24px;background:#5f7fb2;border:2px solid #3a3a39;box-sizing:border-box"></div>
<div class="a" style="left:2137.6px;top:463.7px;width:240.9px;height:35.3px;border:2.0px solid #39393b;border-radius:9.0px;box-sizing:border-box;background:transparent"></div>
<div class="a" style="left:2161px;top:481px;width:170px;height:1.800px;background:#e6e6e6"></div>
<div class="a" style="left:2385.5px;top:463.7px;width:87.5px;height:35.3px;border:2.0px solid #39393b;border-radius:8.0px;box-sizing:border-box;background:transparent"></div>
<div class="a" style="left:2475.0px;top:463.0px;width:19.4px;height:36.5px;border:2.0px solid #39393b;border-radius:7.0px;box-sizing:border-box;background:transparent"></div>
<div class="a" style="left:2385.5px;top:506.0px;width:87.5px;height:35.4px;border:2.0px solid #39393b;border-radius:8.0px;box-sizing:border-box;background:transparent"></div>
<div class="a" style="left:2475.0px;top:505.5px;width:19.4px;height:36.5px;border:2.0px solid #39393b;border-radius:7.0px;box-sizing:border-box;background:transparent"></div>
<div class="a" style="left:2385.5px;top:559.0px;width:87.5px;height:31.4px;border:2.0px solid #39393b;border-radius:8.0px;box-sizing:border-box;background:transparent"></div>
<div class="a" style="left:2475.0px;top:557.0px;width:19.4px;height:36.0px;border:2.0px solid #39393b;border-radius:7.0px;box-sizing:border-box;background:transparent"></div>
<div class="t" style="left:2435.40px;top:472.00px;font-size:19.00px;letter-spacing:0.003px;color:#d2d2d2;">1 pt</div>
<div class="t" style="left:2432.10px;top:515.00px;font-size:19.00px;letter-spacing:1.103px;color:#d2d2d2;">0 pt</div>
<div class="t" style="left:2391.20px;top:566.00px;font-size:19.00px;letter-spacing:0.134px;color:#d2d2d2;">100 %</div>
<div class="a" style="left:2134.4px;top:694.4px;width:359.2px;height:36.1px;border:2.0px solid #36373a;border-radius:9.0px;box-sizing:border-box;background:#2a2b2d"></div>
<div class="a" style="left:2144.500px;top:712.600px;width:339px;height:15.800px;background:linear-gradient(#212224,#1b1c1e);border-radius:0 0 7px 7px"></div>
<div class="t" style="left:2148.60px;top:702.00px;font-size:19.40px;letter-spacing:-0.042px;color:#d2d2d2;">Edit</div>
<div class="a" style="left:2134.8px;top:735.0px;width:358.5px;height:36.3px;border:2.0px solid #39393b;border-radius:8.0px;box-sizing:border-box;background:transparent"></div>
<div class="a" style="left:2134.8px;top:775.7px;width:358.5px;height:36.7px;border:2.0px solid #39393b;border-radius:8.0px;box-sizing:border-box;background:transparent"></div>
<div class="t" style="left:2265.50px;top:744.00px;font-size:19.60px;letter-spacing:0.215px;color:#d2d2d2;">Copy Style</div>
<div class="t" style="left:2224.80px;top:785.00px;font-size:19.40px;letter-spacing:0.386px;color:#d2d2d2;">Set as Default Style</div>
<svg class="a" style="left:0;top:0" width="2516" height="1098" viewBox="0 0 2516 1098" fill="none" stroke="#c0c0c0" stroke-width="2.2" stroke-linecap="butt" stroke-linejoin="miter" >
<path d="M2392.50 335.30l4.20 7.600h-8.40zM2392.50 352.00l4.20 -6.800h-8.40z" fill="#c8c8c8" stroke="none"/>
<path d="M2478.00 704.20l4.20 7.600h-8.40zM2478.00 720.90l4.20 -6.800h-8.40z" fill="#c8c8c8" stroke="none"/>
<path d="M2484.50 469.40l6.200 6.400h-12.400zM2484.50 493.60l6.200 -6.400h-12.400z" fill="#c8c8c8" stroke="none"/>
<path d="M2484.50 511.70l6.200 6.400h-12.400zM2484.50 535.90l6.200 -6.400h-12.400z" fill="#c8c8c8" stroke="none"/>
<path d="M2484.50 562.90l6.200 6.400h-12.400zM2484.50 587.10l6.200 -6.400h-12.400z" fill="#c8c8c8" stroke="none"/>
<path d="M2355.400 477.600l6.900 6.900 6.900-6.900" stroke="#d0d0d0" stroke-width="1.900"/>
<g transform="translate(2479.9 341.0) rotate(45)" stroke="#d4d4d4" stroke-width="1.700" stroke-linejoin="miter">
<path d="M-2.150 -7.600H2.150V14.000L0 16.200L-2.150 14.000Z"/>
<path d="M-5.600 0H5.600" stroke-width="1.800"/>
</g>
<g transform="translate(2479.9 436.4) rotate(45)" stroke="#d4d4d4" stroke-width="1.700" stroke-linejoin="miter">
<path d="M-2.150 -7.600H2.150V14.000L0 16.200L-2.150 14.000Z"/>
<path d="M-5.600 0H5.600" stroke-width="1.800"/>
</g>
<path d="M2147 838.600v13.600l7.300-6.800z" fill="#050505" stroke="none"/>
</svg>
<div class="a" style="left:0;top:1.600px;width:2516px;height:1096.400px;box-sizing:border-box;border:solid #4a4a4c;border-width:0 2.200px 1.800px 2.200px;border-radius:0 0 22px 22px;pointer-events:none"></div>
</div></body></html>
